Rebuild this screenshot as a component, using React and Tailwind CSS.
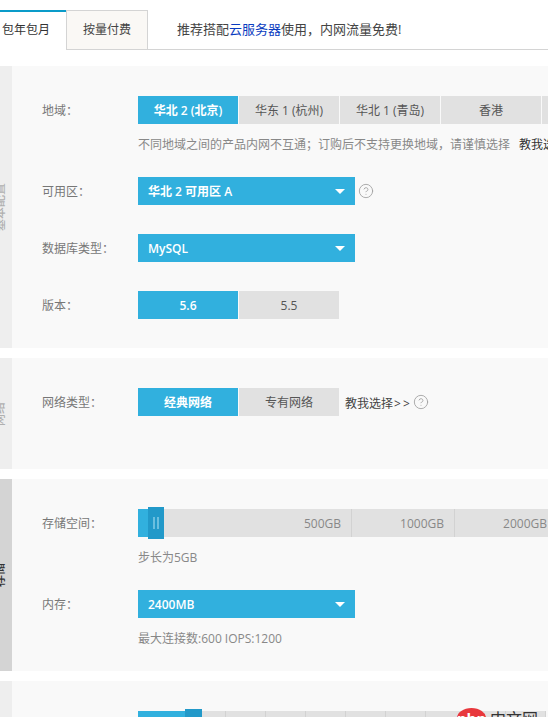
import React from "react";
import { CircleHelp } from "lucide-react";

const Strip = ({ label, bg, color }) => (
  <div className={`w-3 shrink-0 flex items-center justify-center overflow-hidden ${bg}`}>
    <span className={`shrink-0 whitespace-nowrap text-xs font-medium -rotate-90 -translate-x-[6px] ${color}`}>{label}</span>
  </div>
);

const Row = ({ label, children }) => (
  <div className="flex items-start">
    <div className="w-24 shrink-0 h-7 leading-[30px] text-xs text-[#777]">{label}</div>
    {children}
  </div>
);

const Opt = ({ children, on }) => (
  <div
    className={`w-[100px] shrink-0 h-7 leading-[30px] text-center text-xs ${
      on ? "bg-[#31b0de] text-white font-semibold" : "bg-[#e1e1e1] text-[#555]"
    }`}
  >
    {children}
  </div>
);

const Select = ({ children }) => (
  <div className="w-[217px] h-7 pl-2.5 pr-2.5 flex items-center justify-between bg-[#31b0de] text-white text-xs font-semibold">
    <span className="pt-0.5 leading-[26px]">{children}</span>
    <span className="w-0 h-0 border-x-[5px] border-x-transparent border-t-[5px] border-t-white" />
  </div>
);

const Hint = ({ children }) => (
  <div className="mt-[11px] mb-6 h-[18px] leading-5 text-xs text-[#888] whitespace-nowrap">{children}</div>
);

const Seg = ({ w, children }) => (
  <div className={`${w} shrink-0 h-7 leading-[30px] pr-2.5 text-right text-xs text-[#888] border-r border-[#d2d2d2]`}>{children}</div>
);

const Tick = ({ w = "w-10" }) => <div className={`${w} shrink-0 h-7 border-r border-[#d2d2d2]`} />;

const Help = ({ ml }) => <CircleHelp size={16} strokeWidth={1.3} className={`${ml} mt-1.5 text-[#a0a0a0]`} />;

export default function App() {
  return (
    <div className="relative w-[548px] h-[717px] overflow-hidden bg-white font-['Open_Sans','Noto_Sans_CJK_SC',sans-serif]">
      {/* tabs */}
      <div className="flex h-10 mt-2.5 mb-4 text-xs">
        <div className="w-[66px] shrink-0 border-t-2 border-[#0a9bc9] pl-0.5 leading-[36px] text-[#333] whitespace-nowrap">包年包月</div>
        <div className="w-[82px] shrink-0 border border-[#d4d4d4] bg-[#faf8f5] text-center leading-[38px] text-[#444]">按量付费</div>
        <div className="flex-1 border-b border-[#d4d4d4] pl-[29px] text-[13px] leading-[38px] text-[#444] whitespace-nowrap">
          推荐搭配<span className="text-[#0a3cc0]">云服务器</span>使用，内网流量免费!
        </div>
      </div>

      {/* basic */}
      <section className="flex mb-2.5">
        <Strip label="基本配置" bg="bg-[#eeeeee]" color="text-[#b0b0b0]" />
        <div className="flex-1 min-w-0 bg-[#f9f9f9] pt-[30px] pb-[29px] pl-[30px] overflow-hidden">
          <Row label="地域：">
            <div className="flex gap-px">
              <Opt on>华北 2 (北京)</Opt>
              <Opt>华东 1 (杭州)</Opt>
              <Opt>华北 1 (青岛)</Opt>
              <Opt>香港</Opt>
              <Opt> </Opt>
            </div>
          </Row>
          <div className="pl-24">
            <Hint>
              不同地域之间的产品内网不互通；订购后不支持更换地域，请谨慎选择<span className="ml-[9px] text-[#333]">教我选择&gt;&gt;</span>
            </Hint>
          </div>
          <Row label="可用区：">
            <Select>华北 2 可用区 A</Select>
            <Help ml="ml-[3px]" />
          </Row>
          <div className="h-[29px]" />
          <Row label="数据库类型：">
            <Select>MySQL</Select>
          </Row>
          <div className="h-[29px]" />
          <Row label="版本：">
            <div className="flex gap-px">
              <Opt on>5.6</Opt>
              <Opt>5.5</Opt>
            </div>
          </Row>
        </div>
      </section>

      {/* network */}
      <section className="flex mb-2.5">
        <Strip label="网络" bg="bg-[#eeeeee]" color="text-[#b0b0b0]" />
        <div className="flex-1 min-w-0 h-[111px] bg-[#f9f9f9] pt-[30px] pl-[30px]">
          <Row label="网络类型：">
            <div className="flex gap-px">
              <Opt on>经典网络</Opt>
              <Opt>专有网络</Opt>
            </div>
            <span className="ml-1.5 h-7 leading-[30px] mt-px text-xs text-[#444] whitespace-nowrap">
              教我选择<span className="ml-px tracking-[2px]">&gt;&gt;</span>
            </span>
            <Help ml="ml-px" />
          </Row>
        </div>
      </section>

      {/* storage */}
      <section className="flex mb-2.5">
        <Strip label="存储" bg="bg-[#d4d4d4]" color="text-[#333]" />
        <div className="flex-1 min-w-0 bg-[#f9f9f9] pt-[30px] pb-6 pl-[30px] overflow-hidden">
          <Row label="存储空间：">
            <div className="relative flex shrink-0">
              <div className="w-2.5 h-7 bg-[#31b0de]" />
              <div className="flex bg-[#e1e1e1]">
                <Seg w="w-[204px]">500GB</Seg>
                <Seg w="w-[103px]">1000GB</Seg>
                <Seg w="w-[103px]">2000GB</Seg>
              </div>
              <div className="absolute left-2.5 -top-0.5 w-4 h-8 bg-[#2299c9] flex items-center justify-center gap-[2px]">
                <span className="w-0.5 h-3 bg-[#6bbfdf]" />
                <span className="w-0.5 h-3 bg-[#6bbfdf]" />
              </div>
            </div>
          </Row>
          <div className="pl-24">
            <Hint>步长为5GB</Hint>
          </div>
          <Row label="内存：">
            <Select>2400MB</Select>
          </Row>
          <div className="pl-24">
            <div className="mt-[11px] h-[18px] leading-5 text-xs text-[#888] whitespace-nowrap">最大连接数:600 IOPS:1200</div>
          </div>
        </div>
      </section>

      {/* bandwidth */}
      <section className="flex">
        <Strip label="" bg="bg-[#eeeeee]" color="text-[#bbb]" />
        <div className="flex-1 min-w-0 h-[60px] bg-[#f9f9f9] pt-[30px] pl-[126px] overflow-hidden">
          <div className="relative flex">
            <div className="w-[47px] shrink-0 h-7 bg-[#31b0de]" />
            <div className="flex bg-[#e1e1e1]">
              <Tick w="w-[41px]" /><Tick /><Tick /><Tick /><Tick /><Tick /><Tick /><Tick /><Tick />
            </div>
            <div className="absolute left-[47px] -top-0.5 w-[17px] h-8 bg-[#2299c9]" />
          </div>
        </div>
      </section>

      {/* watermark */}
      <div className="absolute left-[457px] top-[708px] w-[29px] h-5 rounded-[50%] bg-[#e8383d] text-white text-[15px] font-bold leading-[20px] text-center">php</div>
      <div className="absolute left-[490px] top-[709px] text-base leading-5 text-[#333] whitespace-nowrap">中文网</div>
    </div>
  );
}
